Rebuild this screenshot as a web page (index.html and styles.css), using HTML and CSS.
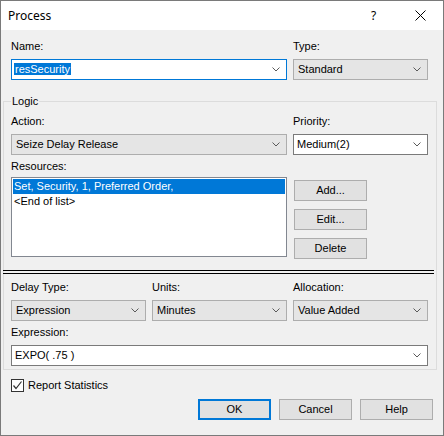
FILE: index.html
```html
<!DOCTYPE html>
<html>
<head>
<meta charset="utf-8">
<link rel="stylesheet" href="styles.css">
</head>
<body>
<div class="window">
  <div class="titlebar">
    <span class="title">Process</span>
    <span class="help">?</span>
    <span class="close"><svg width="11" height="11" viewBox="0 0 11 11"><path d="M0.5 0.5 L10.5 10.5 M10.5 0.5 L0.5 10.5" stroke="#000" stroke-width="1" fill="none"/></svg></span>
  </div>
  <div class="body">
    <div class="row2 top-row">
      <div class="label">Name:</div>
      <div class="label">Type:</div>
    </div>
    <div class="row2 gap-row">
      <div class="combo edit focus"><span class="val"><span class="sel">resSecurity</span></span><svg class="chev" width="8" height="5" viewBox="0 0 8 5"><polyline points="0.5,0.5 4,4 7.5,0.5" fill="none" stroke="#5a5a5a"/></svg></div>
      <div class="combo ro"><span class="val">Standard</span><svg class="chev" width="8" height="5" viewBox="0 0 8 5"><polyline points="0.5,0.5 4,4 7.5,0.5" fill="none" stroke="#5a5a5a"/></svg></div>
    </div>

    <fieldset class="group">
      <legend>Logic</legend>
      <div class="row2 inner-top">
        <div class="label">Action:</div>
        <div class="label">Priority:</div>
      </div>
      <div class="row2 gap-row">
        <div class="combo ro"><span class="val">Seize Delay Release</span><svg class="chev" width="8" height="5" viewBox="0 0 8 5"><polyline points="0.5,0.5 4,4 7.5,0.5" fill="none" stroke="#5a5a5a"/></svg></div>
        <div class="combo edit"><span class="val">Medium(2)</span><svg class="chev" width="8" height="5" viewBox="0 0 8 5"><polyline points="0.5,0.5 4,4 7.5,0.5" fill="none" stroke="#5a5a5a"/></svg></div>
      </div>
      <div class="label res-label">Resources:</div>
      <div class="res-row">
        <div class="listbox">
          <div class="item selected">Set, Security, 1, Preferred Order,</div>
          <div class="item">&lt;End of list&gt;</div>
        </div>
        <div class="btn-col">
          <div class="btn">Add...</div>
          <div class="btn">Edit...</div>
          <div class="btn">Delete</div>
        </div>
      </div>

      <div class="splitter"></div>

      <div class="row3 lower-top">
        <div class="label">Delay Type:</div>
        <div class="label">Units:</div>
        <div class="label">Allocation:</div>
      </div>
      <div class="row3 gap-row">
        <div class="combo ro"><span class="val">Expression</span><svg class="chev" width="8" height="5" viewBox="0 0 8 5"><polyline points="0.5,0.5 4,4 7.5,0.5" fill="none" stroke="#5a5a5a"/></svg></div>
        <div class="combo ro"><span class="val">Minutes</span><svg class="chev" width="8" height="5" viewBox="0 0 8 5"><polyline points="0.5,0.5 4,4 7.5,0.5" fill="none" stroke="#5a5a5a"/></svg></div>
        <div class="combo ro"><span class="val">Value Added</span><svg class="chev" width="8" height="5" viewBox="0 0 8 5"><polyline points="0.5,0.5 4,4 7.5,0.5" fill="none" stroke="#5a5a5a"/></svg></div>
      </div>
      <div class="label expr-label">Expression:</div>
      <div class="combo edit wide"><span class="val">EXPO( .75 )</span><svg class="chev" width="8" height="5" viewBox="0 0 8 5"><polyline points="0.5,0.5 4,4 7.5,0.5" fill="none" stroke="#5a5a5a"/></svg></div>
    </fieldset>

    <div class="check-row">
      <span class="checkbox"><svg width="11" height="11" viewBox="0 0 11 11"><polyline points="1.5,5.5 4,8.5 9.5,1.5" fill="none" stroke="#333" stroke-width="1.2"/></svg></span>
      <span class="check-label">Report Statistics</span>
    </div>

    <div class="footer">
      <div class="btn default">OK</div>
      <div class="btn">Cancel</div>
      <div class="btn">Help</div>
    </div>
  </div>
</div>
</body>
</html>
```

FILE: styles.css
```css
* { box-sizing: border-box; }
html, body { margin: 0; padding: 0; background: #f0f0f0; }
body {
  font-family: "Liberation Sans", Arial, sans-serif;
  font-size: 11px;
  color: #000;
}
.window {
  width: 444px;
  height: 436px;
  border: 1px solid #7a7a7a;
  background: #f0f0f0;
  display: flex;
  flex-direction: column;
  overflow: hidden;
}
.titlebar {
  height: 29px;
  background: #fff;
  display: flex;
  align-items: center;
  padding-left: 7px;
  flex: none;
}
.title {
  font-family: "Noto Sans", "Open Sans", sans-serif;
  font-size: 12px;
  flex: 1;
}
.help {
  font-family: "Noto Sans", sans-serif;
  font-size: 12px;
  width: 10px;
  margin-right: 34px;
}
.close {
  display: flex;
  margin-right: 17px;
}
.body {
  flex: 1;
  display: flex;
  flex-direction: column;
  padding-left: 10px;
}
.label { line-height: 13px; height: 13px; white-space: nowrap; }
.row2 {
  display: grid;
  grid-template-columns: 276px 135px;
  column-gap: 6px;
}
.row3 {
  display: grid;
  grid-template-columns: 135px 135px 135px;
  column-gap: 6px;
}
.top-row { margin-top: 10px; }
.gap-row { margin-top: 6px; }
.combo {
  height: 21px;
  display: flex;
  align-items: center;
  border: 1px solid #adadad;
  padding-left: 3px;
  padding-right: 6px;
}
.combo .val { flex: 1; white-space: nowrap; line-height: 13px; }
.combo.ro { background: #e5e5e5; border-color: #adadad; padding-left: 4px; }
.combo.edit { background: #fff; border-color: #7a7a7a; }
.combo.focus { border-color: #0078d7; padding-left: 2px; }
.sel { background: #0078d7; color: #fff; padding: 0 1px; }
.chev { flex: none; }

.group {
  margin: 15px 0 0 -8px;
  width: 434px;
  border: 1px solid #dcdcdc;
  padding: 0 0 3px 7px;
  min-width: 0;
}
.group legend {
  padding: 0 1px;
  line-height: 13px;
  margin-left: 0;
}
.inner-top { margin-top: 7px; }
.res-label { margin-top: 5px; }
.res-row {
  margin-top: 4px;
  display: flex;
  gap: 6px;
}
.listbox {
  width: 276px;
  height: 80px;
  background: #fff;
  border: 1px solid #828790;
  padding: 1px;
}
.item { line-height: 15px; height: 15px; padding-left: 1px; white-space: nowrap; }
.item.selected { background: #0078d7; color: #fff; }
.btn-col {
  display: flex;
  flex-direction: column;
  gap: 8px;
  padding-top: 3px;
  margin-left: 1px;
}
.btn {
  width: 73px;
  height: 21px;
  background: #e1e1e1;
  border: 1px solid #adadad;
  display: flex;
  align-items: center;
  justify-content: center;
  line-height: 13px;
}
.splitter {
  margin: 11px 0 0 -8px;
  width: 431px;
  height: 4px;
  border-top: 1px solid #000;
  border-bottom: 1px solid #000;
  position: relative;
}
.lower-top { margin-top: 7px; }
.expr-label { margin-top: 5px; }
.combo.wide { width: 417px; margin-top: 6px; }
.check-row {
  margin-top: 9px;
  display: flex;
  align-items: center;
  height: 13px;
}
.checkbox {
  width: 13px;
  height: 13px;
  border: 1px solid #333;
  background: #fff;
  display: flex;
  align-items: center;
  justify-content: center;
}
.check-label { margin-left: 4px; line-height: 13px; }
.footer {
  margin-top: 7px;
  display: flex;
  gap: 8px;
  padding-left: 187px;
}
.btn.default { border: 2px solid #0078d7; }
```
